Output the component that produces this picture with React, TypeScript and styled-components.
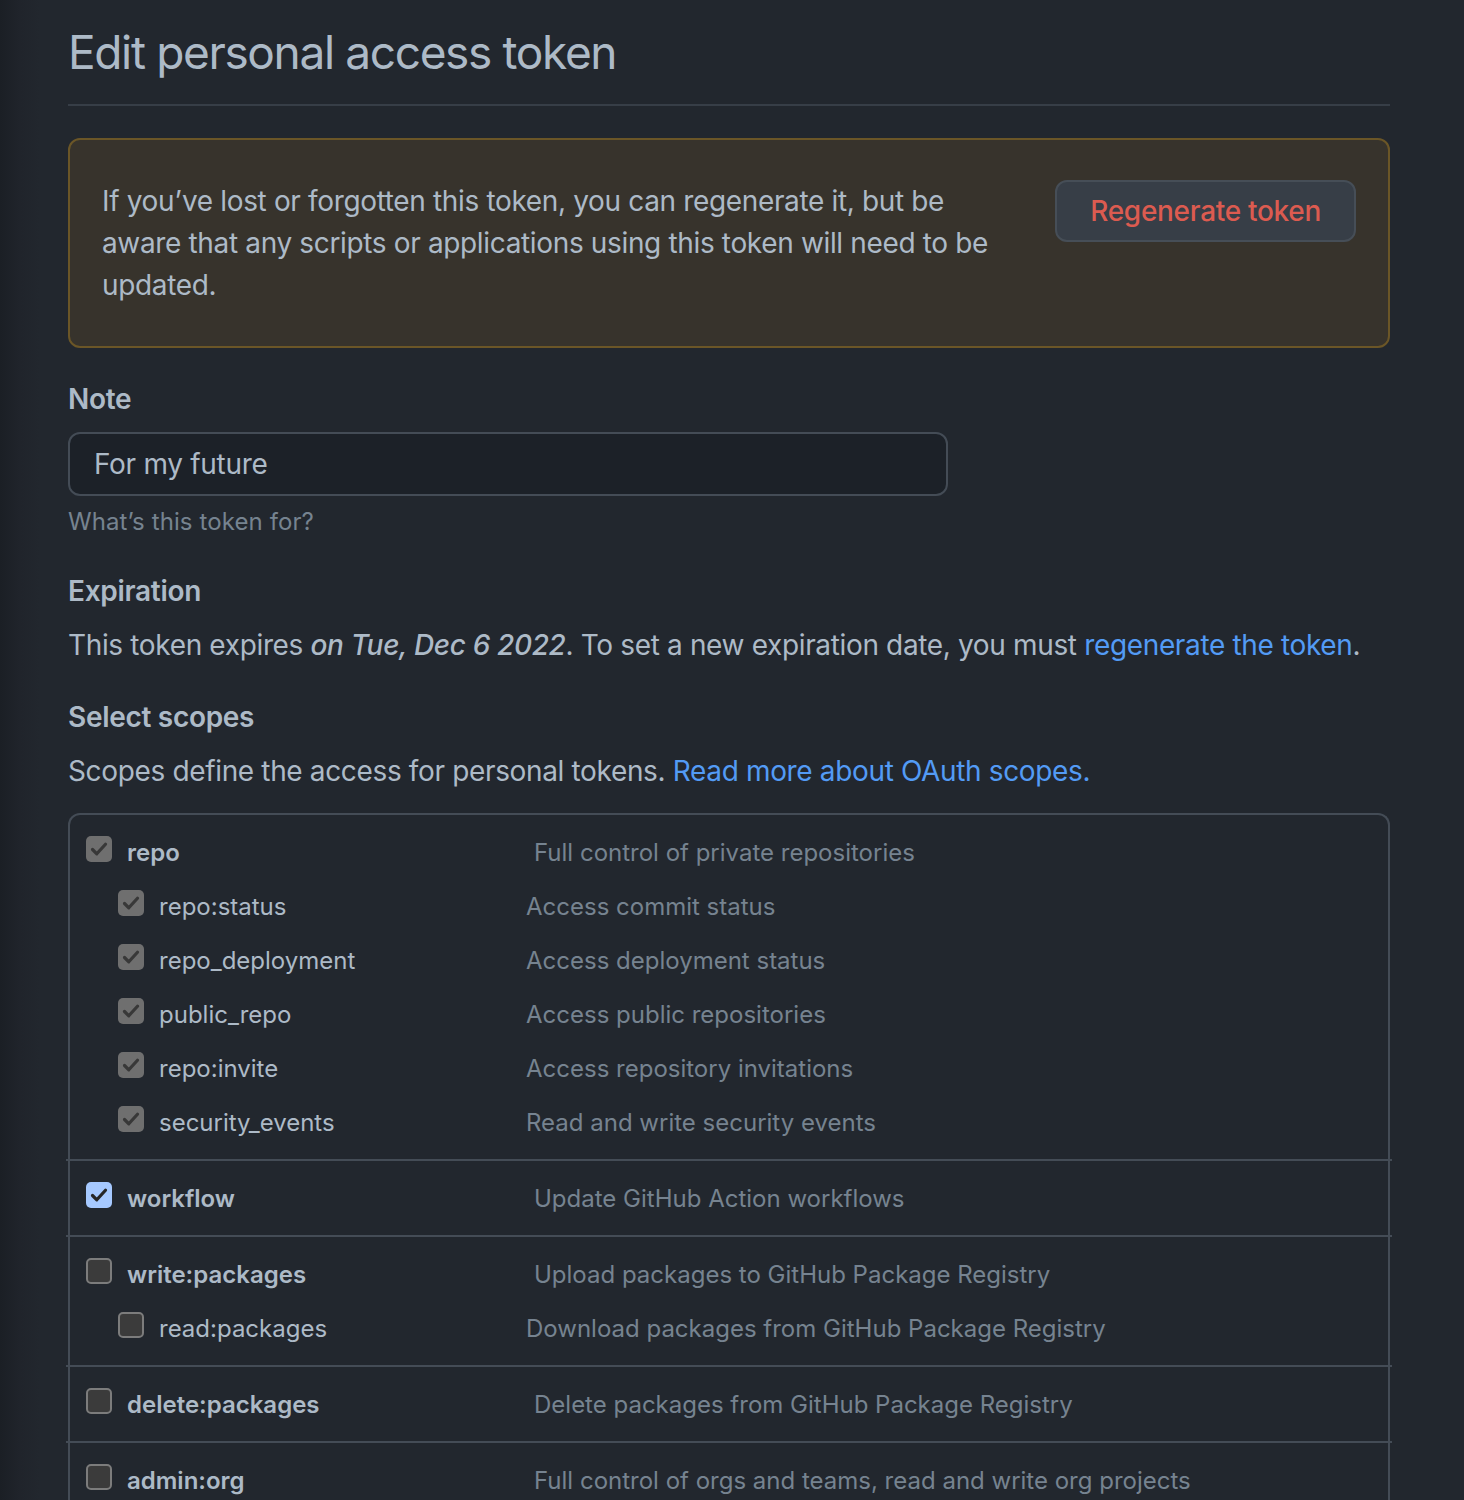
import React from "react";
import styled, { createGlobalStyle } from "styled-components";

const Global = createGlobalStyle`
  html, body {
    margin: 0;
    padding: 0;
    background: #22272e;
  }
  body {
    min-height: 1500px;
    background: linear-gradient(90deg, #1b1f25 0px, #20242b 20px, #22272e 40px);
    font-family: Inter, "Noto Sans", "Liberation Sans", sans-serif;
    color: #adbac7;
    -webkit-font-smoothing: antialiased;
  }
`;

const Page = styled.main`
  width: 1322px;
  margin-left: 68px;
  padding-top: 16px;
`;

const Subhead = styled.header`
  padding-bottom: 16px;
  margin-bottom: 32px;
  border-bottom: 2px solid #373e47;
`;

const Title = styled.h1`
  margin: 0;
  font-size: 46px;
  line-height: 72px;
  font-weight: 400;
  letter-spacing: -1.35px;
  color: #adbac7;
`;

const Flash = styled.div`
  display: flex;
  justify-content: space-between;
  align-items: flex-start;
  padding: 40px 32px;
  border: 2px solid #6b5627;
  border-radius: 12px;
  background: #37332c;
`;

const FlashText = styled.p`
  margin: 0;
  width: 905px;
  font-size: 28px;
  line-height: 42px;
  letter-spacing: -0.35px;
  color: #adbac7;
`;

const DangerButton = styled.button`
  flex: none;
  height: 62px;
  padding: 0 33px;
  border: 2px solid #464e57;
  border-radius: 12px;
  background: #373e47;
  color: #dc5b50;
  font-family: inherit;
  font-size: 28px;
  font-weight: 500;
  letter-spacing: -0.3px;
  cursor: pointer;
`;

const FormGroup = styled.section<{ $top?: number }>`
  margin-top: ${(p) => p.$top ?? 30}px;
`;

const Label = styled.h2`
  margin: 0 0 12px;
  font-size: 28px;
  line-height: 42px;
  font-weight: 600;
  letter-spacing: -0.3px;
  color: #adbac7;
`;

const Input = styled.input`
  box-sizing: border-box;
  display: block;
  width: 880px;
  height: 64px;
  padding: 0 24px;
  border: 2px solid #444c56;
  border-radius: 12px;
  background: #1c2128;
  color: #adbac7;
  font-family: inherit;
  font-size: 28px;
  letter-spacing: -0.3px;
  outline: none;
`;

const Hint = styled.p`
  margin: 8px 0 0;
  font-size: 24px;
  line-height: 36px;
  letter-spacing: 0.1px;
  color: #768390;
`;

const Paragraph = styled.p`
  margin: 0;
  font-size: 28px;
  line-height: 42px;
  letter-spacing: -0.35px;
  color: #adbac7;
`;

const Emph = styled.em`
  font-style: italic;
  font-weight: 500;
`;

const Link = styled.a`
  color: #539bf5;
  text-decoration: none;
`;

const ScopeBox = styled.div`
  margin-top: 21px;
  border: 2px solid #444c56;
  border-bottom: none;
  border-radius: 12px 12px 0 0;
`;

const Group = styled.ul`
  list-style: none;
  margin: 0;
  padding: 10px 0;
`;

const Divider = styled.hr`
  margin: 0 -4px;
  height: 2px;
  border: none;
  background: #444c56;
`;

const Row = styled.li<{ $child?: boolean }>`
  display: flex;
  align-items: center;
  height: 54px;
  padding-left: ${(p) => (p.$child ? 48 : 16)}px;
`;

const ScopeLabel = styled.label<{ $child?: boolean }>`
  display: flex;
  align-items: center;
  gap: 15px;
  width: ${(p) => (p.$child ? 408 : 448)}px;
  font-size: 24px;
  font-weight: ${(p) => (p.$child ? 400 : 600)};
  letter-spacing: 0;
  color: #adbac7;
`;

const Desc = styled.span`
  font-size: 24px;
  letter-spacing: 0;
  color: #768390;
`;

type BoxState = "disabled" | "checked" | "unchecked";

const Box = styled.span<{ $state: BoxState }>`
  box-sizing: border-box;
  flex: none;
  width: 26px;
  height: 26px;
  margin-bottom: 6px;
  border-radius: 5px;
  display: flex;
  align-items: center;
  justify-content: center;
  background: ${(p) =>
    p.$state === "disabled" ? "#6f6f6f" : p.$state === "checked" ? "#a6c9ff" : "#3b3b3b"};
  border: ${(p) => (p.$state === "unchecked" ? "2px solid #7c7c7c" : "none")};
`;

const CheckBox = ({ state }: { state: BoxState }) => (
  <Box $state={state}>
    {state !== "unchecked" && (
      <svg width="20" height="20" viewBox="0 0 20 20" fill="none">
        <path
          d="M3.5 10.5 L7.8 14.8 L16.5 5.2"
          stroke={state === "disabled" ? "#383838" : "#262626"}
          strokeWidth="3.2"
          strokeLinecap="round"
          strokeLinejoin="round"
        />
      </svg>
    )}
  </Box>
);

type Scope = { name: string; desc: string; state: BoxState; children?: { name: string; desc: string }[] };

const scopes: Scope[] = [
  {
    name: "repo",
    desc: "Full control of private repositories",
    state: "disabled",
    children: [
      { name: "repo:status", desc: "Access commit status" },
      { name: "repo_deployment", desc: "Access deployment status" },
      { name: "public_repo", desc: "Access public repositories" },
      { name: "repo:invite", desc: "Access repository invitations" },
      { name: "security_events", desc: "Read and write security events" },
    ],
  },
  { name: "workflow", desc: "Update GitHub Action workflows", state: "checked" },
  {
    name: "write:packages",
    desc: "Upload packages to GitHub Package Registry",
    state: "unchecked",
    children: [{ name: "read:packages", desc: "Download packages from GitHub Package Registry" }],
  },
  { name: "delete:packages", desc: "Delete packages from GitHub Package Registry", state: "unchecked" },
  {
    name: "admin:org",
    desc: "Full control of orgs and teams, read and write org projects",
    state: "unchecked",
  },
];

export default function App() {
  return (
    <>
      <Global />
      <Page>
        <Subhead>
          <Title>Edit personal access token</Title>
        </Subhead>
        <Flash>
          <FlashText>
            If you’ve lost or forgotten this token, you can regenerate it, but be aware that any scripts or
            applications using this token will need to be updated.
          </FlashText>
          <DangerButton>Regenerate token</DangerButton>
        </Flash>

        <FormGroup>
          <Label>Note</Label>
          <Input defaultValue="For my future" />
          <Hint>What’s this token for?</Hint>
        </FormGroup>

        <FormGroup>
          <Label>Expiration</Label>
          <Paragraph>
            This token expires <Emph>on Tue, Dec 6 2022</Emph>. To set a new expiration date, you must{" "}
            <Link href="#">regenerate the token</Link>.
          </Paragraph>
        </FormGroup>

        <FormGroup>
          <Label>Select scopes</Label>
          <Paragraph>
            Scopes define the access for personal tokens. <Link href="#">Read more about OAuth scopes.</Link>
          </Paragraph>
          <ScopeBox>
            {scopes.map((s, i) => (
              <React.Fragment key={s.name}>
                {i > 0 && <Divider />}
                <Group>
                  <Row>
                    <ScopeLabel>
                      <CheckBox state={s.state} />
                      {s.name}
                    </ScopeLabel>
                    <Desc>{s.desc}</Desc>
                  </Row>
                  {s.children?.map((c) => (
                    <Row $child key={c.name}>
                      <ScopeLabel $child>
                        <CheckBox state={s.state} />
                        {c.name}
                      </ScopeLabel>
                      <Desc>{c.desc}</Desc>
                    </Row>
                  ))}
                </Group>
              </React.Fragment>
            ))}
          </ScopeBox>
        </FormGroup>
      </Page>
    </>
  );
}
